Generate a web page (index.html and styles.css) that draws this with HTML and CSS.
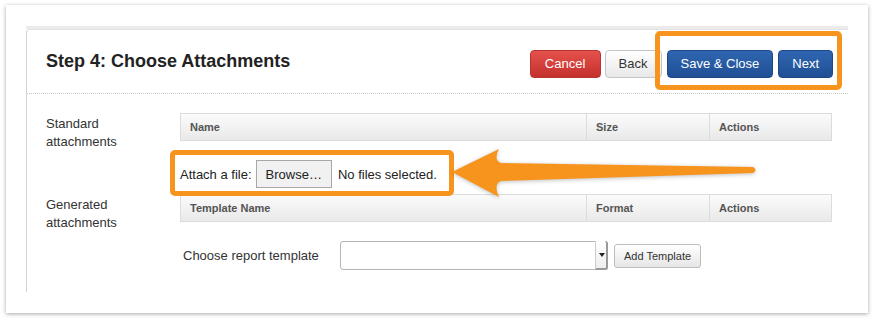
FILE: index.html
```html
<!DOCTYPE html>
<html lang="en">

<head>
    <meta charset="UTF-8">
    <meta name="viewport" content="width=device-width, initial-scale=1.0">
    <title>Step 4: Choose Attachments</title>
    <link rel="stylesheet" href="styles.css">
</head>

<body>
    <div class="card">
        <div class="strip"></div>
        <div class="panel">
            <div class="panel-head">
                <h1>Step 4: Choose Attachments</h1>
                <div class="actions">
                    <button class="btn btn-red">Cancel</button>
                    <button class="btn">Back</button>
                    <button class="btn btn-blue">Save &amp; Close</button>
                    <button class="btn btn-blue">Next</button>
                </div>
            </div>

            <div class="section">
                <div class="label">Standard<br>attachments</div>
                <div class="content">
                    <div class="grid-head">
                        <div class="col-name">Name</div>
                        <div class="col-mid">Size</div>
                        <div class="col-act">Actions</div>
                    </div>
                    <div class="file-row">
                        <span>Attach a file:</span>
                        <span class="browse">Browse…</span>
                        <span>No files selected.</span>
                    </div>
                </div>
            </div>

            <div class="section">
                <div class="label">Generated<br>attachments</div>
                <div class="content">
                    <div class="grid-head">
                        <div class="col-name">Template Name</div>
                        <div class="col-mid">Format</div>
                        <div class="col-act">Actions</div>
                    </div>
                    <div class="template-row">
                        <span class="template-label">Choose report template</span>
                        <div class="select"><span class="select-arrow"></span></div>
                        <button class="btn-small">Add Template</button>
                    </div>
                </div>
            </div>
        </div>
    </div>

    <!-- annotations drawn over the screenshot -->
    <div class="note note-buttons"></div>
    <div class="note note-file"></div>
    <svg class="arrow" width="874" height="320" viewBox="0 0 874 320">
        <path d="M452,172 L499,149 Q493,160 501,163 L753,167 Q758,170 753,173 L501,181 Q493,184 499,197 Z" fill="#f7941e" />
    </svg>
</body>

</html>
```

FILE: styles.css
```css
body {
    font-family: "Liberation Sans", Arial, sans-serif;
    background-color: #fff;
    margin: 0;
    padding: 0;
    color: #333;
}

.card {
    margin: 5px 6px;
    height: 308px;
    box-sizing: border-box;
    padding: 21px 20px 0 20px;
    background-color: #fff;
    box-shadow: 0 1px 4px rgba(0, 0, 0, 0.35);
}

.strip {
    height: 3px;
    background-color: #ebebeb;
}

.panel {
    border-left: 1px solid #d4d4d4;
    border-top: 1px solid #e2e2e2;
    border-top-left-radius: 4px;
    height: 263px;
    box-sizing: border-box;
}

.panel-head {
    display: flex;
    justify-content: space-between;
    align-items: center;
    height: 64px;
    box-sizing: border-box;
    padding: 0 15px 0 19px;
    border-bottom: 1px dotted #c8c8c8;
}

h1 {
    font-size: 18px;
    font-weight: bold;
    color: #222;
    margin: 0;
}

.actions {
    display: flex;
    gap: 4px;
    padding-top: 4px;
}

.btn {
    font-family: "Liberation Sans", Arial, sans-serif;
    font-size: 13px;
    height: 28px;
    padding: 0 13px;
    border: 1px solid #c5c5c5;
    border-radius: 4px;
    color: #333;
    background: linear-gradient(#ffffff, #e8e8e8);
}

.btn-red {
    color: #fff;
    border-color: #b73431;
    background: linear-gradient(#e5514c, #c4312c);
    width: 71px;
}

.btn-blue {
    color: #fff;
    border-color: #1f4787;
    background: linear-gradient(#2f66b1, #204f95);
    margin-left: 1px;
}

.section {
    display: flex;
}

.label {
    width: 153px;
    padding-left: 19px;
    box-sizing: border-box;
    font-size: 13px;
    line-height: 18px;
    color: #333;
}

.panel-head + .section .label {
    padding-top: 21px;
}

.panel-head + .section .content {
    padding-top: 19px;
}

.section + .section .label {
    padding-top: 2px;
}

.content {
    width: 652px;
}

.grid-head {
    display: flex;
    height: 28px;
    box-sizing: border-box;
    border: 1px solid #dcdcdc;
    background: linear-gradient(#fbfbfb, #e9e9e9);
    font-size: 11px;
    font-weight: bold;
    color: #555;
    line-height: 26px;
}

.grid-head div {
    padding-left: 9px;
    box-sizing: border-box;
}

.col-name {
    width: 405px;
}

.col-mid {
    width: 123px;
    border-left: 1px solid #dcdcdc;
}

.col-act {
    flex: 1;
    border-left: 1px solid #dcdcdc;
}

.file-row {
    display: flex;
    align-items: center;
    height: 53px;
    padding-top: 13px;
    box-sizing: border-box;
    font-size: 13px;
    color: #222;
}

.browse {
    height: 28px;
    line-height: 27px;
    box-sizing: border-box;
    padding: 0 9px;
    margin: 0 6px 0 4px;
    border: 1px solid #a8a8a8;
    background-color: #f1f1f1;
}

.template-row {
    display: flex;
    align-items: center;
    padding-top: 19px;
}

.template-label {
    font-size: 13px;
    color: #333;
    width: 157px;
    padding-left: 3px;
}

.select {
    width: 268px;
    height: 29px;
    box-sizing: border-box;
    border: 1px solid #b5b5b5;
    border-radius: 3px;
    background-color: #fff;
    position: relative;
}

.select-arrow {
    position: absolute;
    right: -1px;
    top: -1px;
    width: 13px;
    height: 29px;
    box-sizing: border-box;
    border-left: 1px solid #ccc;
    border-right: 2px solid #999;
    border-bottom: 2px solid #999;
    border-radius: 0 3px 3px 0;
    background: linear-gradient(#fff, #eee);
}

.select-arrow::after {
    content: "";
    position: absolute;
    left: 3px;
    top: 12px;
    border-left: 3px solid transparent;
    border-right: 3px solid transparent;
    border-top: 4px solid #222;
}

.btn-small {
    font-family: "Liberation Sans", Arial, sans-serif;
    font-size: 11px;
    height: 24px;
    margin-left: 6px;
    padding: 0 9px;
    border: 1px solid #bdbdbd;
    border-radius: 3px;
    color: #333;
    background: linear-gradient(#ffffff, #e6e6e6);
}

/* Annotation boxes */
.note {
    position: absolute;
    border: 5px solid #f7941e;
    border-radius: 5px;
    box-sizing: border-box;
}

.note-buttons {
    left: 655px;
    top: 31px;
    width: 187px;
    height: 59px;
}

.note-file {
    left: 170px;
    top: 150px;
    width: 284px;
    height: 46px;
}

.arrow {
    position: absolute;
    left: 0;
    top: 0;
    filter: drop-shadow(0 1px 2px rgba(0, 0, 0, 0.25));
}
```
